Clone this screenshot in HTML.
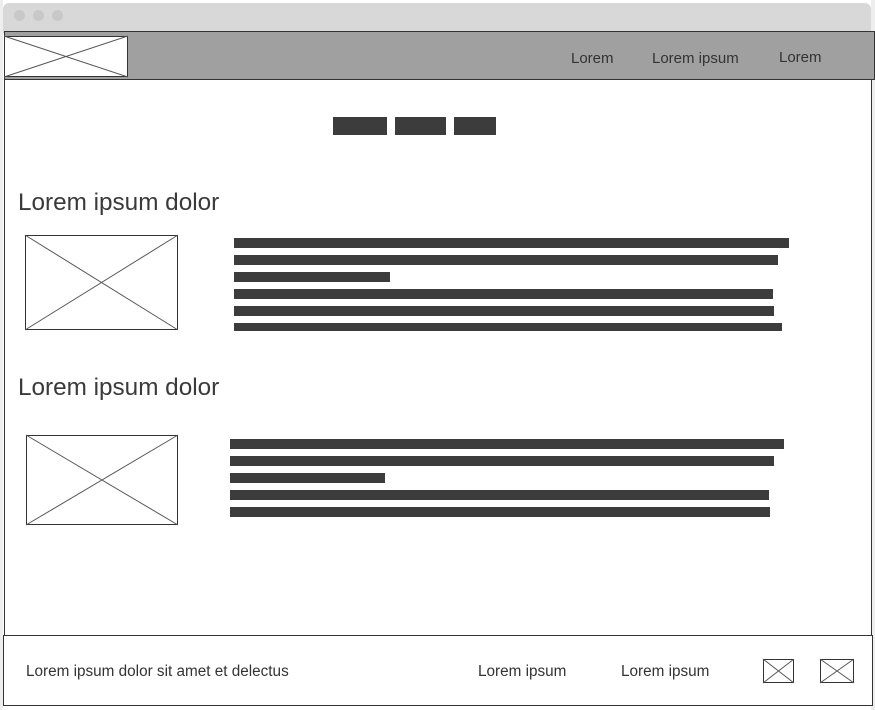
<!DOCTYPE html>
<html><head><meta charset="utf-8"><style>
*{margin:0;padding:0;box-sizing:border-box}
body{width:875px;height:710px;background:#fff;position:relative;overflow:hidden;font-family:"Liberation Sans",sans-serif;color:#333}
.a{position:absolute}
.bar{position:absolute;background:#3c3c3c}
.dot{position:absolute;width:11px;height:11px;border-radius:50%;background:#c8c8c8;top:10px}
svg{position:absolute;overflow:visible}
</style></head><body>
<div class="a" style="left:3px;top:3px;width:868px;height:30px;background:#d8d8d8;border-radius:6px 6px 0 0"></div>
<div class="a" style="left:0;top:0;width:3px;height:710px;background:#eee"></div>
<div class="a" style="left:871px;top:0;width:4px;height:710px;background:#eee"></div>
<div class="dot" style="left:14px"></div><div class="dot" style="left:33px"></div><div class="dot" style="left:52px"></div>
<div class="a" style="left:4px;top:79px;width:868px;height:560px;border:1px solid #333;border-top:none;background:#fff"></div>
<div class="a" style="left:4px;top:31px;width:871px;height:49px;background:#a0a0a0;border:1px solid #333"></div>
<svg style="left:4px;top:36px" width="124" height="41"><rect x="0.5" y="0.5" width="123" height="40" fill="#fff" stroke="#333"/><line x1="0" y1="0" x2="124" y2="41" stroke="#555"/><line x1="0" y1="41" x2="124" y2="0" stroke="#555"/></svg>
<div class="a" style="left:571px;top:50px;font-size:15px;color:#333">Lorem</div>
<div class="a" style="left:652px;top:50px;font-size:15px;color:#333">Lorem ipsum</div>
<div class="a" style="left:779px;top:49px;font-size:15px;color:#333">Lorem</div>
<div class="bar" style="left:333px;top:117px;width:54px;height:18px"></div>
<div class="bar" style="left:395px;top:117px;width:51px;height:18px"></div>
<div class="bar" style="left:454px;top:117px;width:42px;height:18px"></div>
<div class="a" style="left:18px;top:189px;font-size:24.3px;color:#3a3a3a">Lorem ipsum dolor</div>
<svg style="left:25px;top:235px" width="153" height="95"><rect x="0.5" y="0.5" width="152" height="94" fill="#fff" stroke="#333"/><line x1="0" y1="0" x2="153" y2="95" stroke="#555"/><line x1="0" y1="95" x2="153" y2="0" stroke="#555"/></svg>
<div class="bar" style="left:234px;top:238px;width:555px;height:10px"></div>
<div class="bar" style="left:234px;top:255px;width:544px;height:10px"></div>
<div class="bar" style="left:234px;top:272px;width:156px;height:10px"></div>
<div class="bar" style="left:234px;top:289px;width:539px;height:10px"></div>
<div class="bar" style="left:234px;top:306px;width:540px;height:10px"></div>
<div class="bar" style="left:234px;top:323px;width:548px;height:8px"></div>
<div class="a" style="left:18px;top:374px;font-size:24.3px;color:#3a3a3a">Lorem ipsum dolor</div>
<svg style="left:26px;top:435px" width="152" height="90"><rect x="0.5" y="0.5" width="151" height="89" fill="#fff" stroke="#333"/><line x1="0" y1="0" x2="152" y2="90" stroke="#555"/><line x1="0" y1="90" x2="152" y2="0" stroke="#555"/></svg>
<div class="bar" style="left:230px;top:439px;width:554px;height:10px"></div>
<div class="bar" style="left:230px;top:456px;width:544px;height:10px"></div>
<div class="bar" style="left:230px;top:473px;width:155px;height:10px"></div>
<div class="bar" style="left:230px;top:490px;width:539px;height:10px"></div>
<div class="bar" style="left:230px;top:507px;width:540px;height:10px"></div>
<div class="a" style="left:3px;top:635px;width:870px;height:71px;border:1px solid #333;background:#fff"></div>
<div class="a" style="left:26px;top:663px;font-size:15.3px;color:#333">Lorem ipsum dolor sit amet et delectus</div>
<div class="a" style="left:478px;top:663px;font-size:15.3px;color:#333">Lorem ipsum</div>
<div class="a" style="left:621px;top:663px;font-size:15.3px;color:#333">Lorem ipsum</div>
<svg style="left:763px;top:659px" width="31" height="24"><rect x="0.5" y="0.5" width="30" height="23" fill="#fff" stroke="#333"/><line x1="0" y1="0" x2="31" y2="24" stroke="#555"/><line x1="0" y1="24" x2="31" y2="0" stroke="#555"/></svg>
<svg style="left:820px;top:659px" width="34" height="24"><rect x="0.5" y="0.5" width="33" height="23" fill="#fff" stroke="#333"/><line x1="0" y1="0" x2="34" y2="24" stroke="#555"/><line x1="0" y1="24" x2="34" y2="0" stroke="#555"/></svg>
</body></html>
